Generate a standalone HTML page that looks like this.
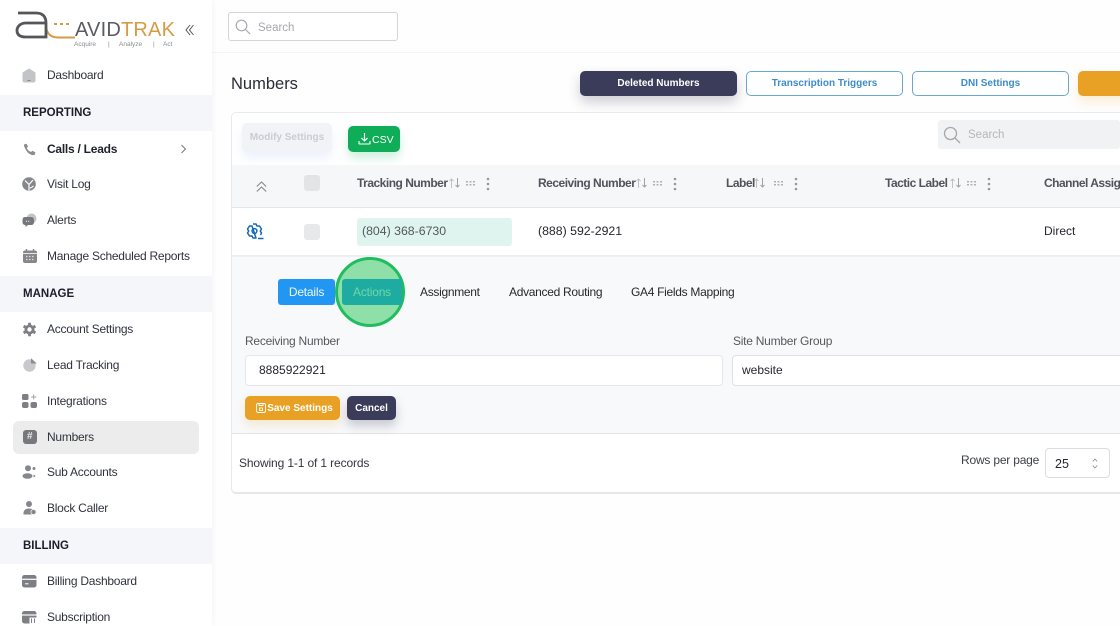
<!DOCTYPE html>
<html><head><meta charset="utf-8"><style>
html,body{margin:0;padding:0}
body{width:1120px;height:626px;overflow:hidden;position:relative;background:#fff;font-family:"Liberation Sans",sans-serif;color:#2c2f3a}
.a,.t,svg.i{position:absolute}
.t{white-space:nowrap;line-height:16px;height:16px}
.nav{font-size:12px;left:47px;color:#30333d;letter-spacing:-.25px}
.sec{left:0;width:212px;height:36px;background:#f4f6f9}
.sect{left:23px;font-size:11.5px;font-weight:bold;color:#1c1f2b}
.th{font-size:12px;font-weight:bold;color:#50535c;letter-spacing:-.5px}
.btn{position:absolute;border-radius:5px;box-sizing:border-box;font-size:10px;font-weight:bold;text-align:center;white-space:nowrap}
.tab{font-size:12px;color:#26282e;letter-spacing:-.3px}
.lbl{font-size:12px;color:#55585f;letter-spacing:-.25px}
.tag{font-size:6.5px;line-height:8px;height:8px;color:#8b8c90;top:41px}
svg.i{overflow:visible}
</style></head><body>
<!-- main -->
<div class="a" style="left:212px;top:0;width:908px;height:626px;background:#fefefe"></div>
<div class="a" style="left:212px;top:52px;width:908px;height:1px;background:#f3f4f6"></div>
<div class="a" style="left:228px;top:12px;width:170px;height:29px;box-sizing:border-box;border:1px solid #d3d5d9;border-radius:3px;background:#fff"></div>
<svg class="i" style="left:235px;top:19px" width="16" height="16" viewBox="0 0 16 16" fill="none" stroke="#a6a9ae" stroke-width="1.2"><circle cx="6.5" cy="6.5" r="5.3"/><path d="M10.500 10.500l4.500 4.500"/></svg>
<div class="t" style="left:258px;top:20px;font-size:11.5px;color:#a5a8ad">Search</div>

<!-- sidebar -->
<div class="a" style="left:0;top:0;width:212px;height:626px;background:#fff;box-shadow:2px 0 5px rgba(0,0,0,.03)"></div>
<svg class="i" style="left:16px;top:10px" width="90" height="32" viewBox="0 0 90 32" fill="none">
<path d="M30 17C31 24 35 27.500 42 27.500H59" stroke="#d79a45" stroke-width="2"/>
<path d="M38 14H56" stroke="#d79a45" stroke-width="2" stroke-dasharray="3 3"/>
<path d="M2 3H20C27 3 30 7 30 13V27H10C4 27 1 25 1 20.500C1 17 4 13 10 13H30" stroke="#55565a" stroke-width="2.800"/>
</svg>
<div class="t" style="left:75px;top:19px;height:22px;line-height:22px;font-size:20px;color:#5a5b60;letter-spacing:.2px">AVID<span style="color:#d79a45">TRAK</span></div>
<div class="t tag" style="left:74px">Acquire</div>
<div class="t tag" style="left:108px">|</div>
<div class="t tag" style="left:119px">Analyze</div>
<div class="t tag" style="left:153px">|</div>
<div class="t tag" style="left:163px">Act</div>
<svg class="i" style="left:185px;top:24px" width="9" height="12" viewBox="0 0 9 12" fill="none" stroke="#55565a" stroke-width="1"><path d="M5 1L1 6l4 5M8.500 1L4.500 6l4 5"/></svg>

<svg class="i" style="left:22px;top:68px" width="14" height="15" viewBox="0 0 14 15"><path d="M7 .5L13.500 4.500V12.500Q13.500 14.500 11.500 14.500H2.500Q.5 14.500 .5 12.500V4.500Z" fill="#c3c4c7"/><path d="M5.500 12.500H8.500" stroke="#777" stroke-width=".8"/></svg>
<div class="t nav" style="top:67px">Dashboard</div>

<div class="a sec" style="top:95px"></div><div class="t sect" style="top:105px">REPORTING</div>

<svg class="i" style="left:23px;top:143px" width="13" height="13" viewBox="0 0 13 13"><path d="M1 1.500L3.500 .8 5 3.500 3.800 5C4.500 6.800 6 8.200 8 9L9.500 7.800 12.500 9.500 11.500 12Q5 13 1 3Z" fill="#8a8c90"/></svg>
<div class="t nav" style="top:141px;font-weight:bold;color:#1f222c">Calls / Leads</div>
<svg class="i" style="left:180px;top:144px" width="7" height="10" viewBox="0 0 7 10" fill="none" stroke="#75777d" stroke-width="1"><path d="M1.500 1l4 4-4 4"/></svg>

<svg class="i" style="left:22px;top:177px" width="14" height="14" viewBox="0 0 14 14"><circle cx="7" cy="7" r="6.800" fill="#85878b"/><path d="M3 3.500L7 7.500 11 3M7 8V13.500M8 11Q10 10.500 11.500 9" stroke="#fff" stroke-width="1.200" fill="none"/></svg>
<div class="t nav" style="top:176px">Visit Log</div>

<svg class="i" style="left:22px;top:213px" width="15" height="15" viewBox="0 0 15 15"><circle cx="9.500" cy="5.500" r="5" fill="#c2c3c6"/><path d="M3 4H9Q12 4 12 7V9Q12 12 9 12H6L3.500 14V12Q.5 12 .5 9V7Q.5 4 3 4Z" fill="#75777c"/><path d="M4 8.200H8.500" stroke="#fff" stroke-width="1" stroke-dasharray="1 1.200"/></svg>
<div class="t nav" style="top:212px">Alerts</div>

<svg class="i" style="left:23px;top:249px" width="14" height="14" viewBox="0 0 14 14"><rect x="0" y="1.500" width="14" height="12.500" rx="2" fill="#85878b"/><path d="M3.500 0V3M10.500 0V3" stroke="#85878b" stroke-width="1.400"/><path d="M0 4.500H14" stroke="#fff" stroke-width=".8"/><path d="M3 7.500H11M3 10.500H11" stroke="#ddd" stroke-width="1.200" stroke-dasharray="1.500 1.500"/></svg>
<div class="t nav" style="top:248px">Manage Scheduled Reports</div>

<div class="a sec" style="top:276px"></div><div class="t sect" style="top:286px">MANAGE</div>

<svg class="i" style="left:22px;top:322px" width="15" height="15" viewBox="0 0 15 15"><circle cx="7.500" cy="7.500" r="5" fill="#7d7f84"/><path d="M7.500 .7V14.300M1.600 4.100L13.400 10.900M1.600 10.900L13.400 4.100" stroke="#7d7f84" stroke-width="2.800"/><circle cx="7.500" cy="7.500" r="2.200" fill="#fff"/></svg>
<div class="t nav" style="top:321px">Account Settings</div>

<svg class="i" style="left:23px;top:358px" width="14" height="14" viewBox="0 0 14 14"><circle cx="6.500" cy="7.500" r="6.200" fill="#c8c9cc"/><path d="M8 .3L13.800 5.500H8Z" fill="#8a8c90"/></svg>
<div class="t nav" style="top:357px">Lead Tracking</div>

<svg class="i" style="left:22px;top:394px" width="15" height="14" viewBox="0 0 15 14" fill="#7d7f84"><rect x="0" y="0" width="6.500" height="6" rx="1.500"/><rect x="0" y="8" width="6.500" height="6" rx="2"/><rect x="8.500" y="8" width="6.500" height="6" rx="2"/><path d="M11.700 .5V5.500M9.200 3H14.200" stroke="#9a9ca0" stroke-width=".9"/></svg>
<div class="t nav" style="top:393px">Integrations</div>

<div class="a" style="left:13px;top:421px;width:186px;height:33px;background:#ececec;border-radius:6px"></div>
<div class="a" style="left:23px;top:430px;width:13.500px;height:14px;border-radius:3px;background:#76787d;color:#e6e6e6;font-size:10px;line-height:14px;text-align:center;font-weight:bold">#</div>
<div class="t nav" style="top:429px">Numbers</div>

<svg class="i" style="left:22px;top:465px" width="14" height="14" viewBox="0 0 14 14" fill="#85878b"><circle cx="6" cy="3.200" r="3"/><ellipse cx="5.500" cy="11" rx="5" ry="2.800"/><circle cx="12" cy="3.500" r="1.500"/><path d="M11.500 9.500L13.800 11 11.500 12.500Z"/></svg>
<div class="t nav" style="top:464px">Sub Accounts</div>

<svg class="i" style="left:23px;top:501px" width="14" height="14" viewBox="0 0 14 14" fill="#85878b"><circle cx="6" cy="3" r="3"/><path d="M.5 13.500Q0 7.500 6 7.500T11.500 13.500Z"/><circle cx="10.500" cy="11" r="2.600" stroke="#fff" stroke-width=".7"/></svg>
<div class="t nav" style="top:500px">Block Caller</div>

<div class="a sec" style="top:528px"></div><div class="t sect" style="top:538px">BILLING</div>

<svg class="i" style="left:22px;top:575px" width="15" height="13" viewBox="0 0 15 13"><rect width="14.500" height="12.500" rx="2.500" fill="#7d7f84"/><path d="M0 4.300H14.500" stroke="#fff" stroke-width="1.200"/><path d="M3 8.800H6.500" stroke="#fff" stroke-width="1"/></svg>
<div class="t nav" style="top:573px">Billing Dashboard</div>

<svg class="i" style="left:22px;top:611px" width="15" height="13" viewBox="0 0 15 13"><rect width="14.500" height="12.500" rx="2.500" fill="#7d7f84"/><path d="M0 4H14.500" stroke="#fff" stroke-width="1.200"/><rect x="7.500" y="6.500" width="7" height="6" fill="#fff"/><path d="M9.500 12V7.500M12.500 7.500V12" stroke="#7d7f84"/></svg>
<div class="t nav" style="top:609px">Subscription</div>

<!-- page header -->
<div class="t" style="left:231px;top:74px;height:20px;line-height:20px;font-size:16.500px;color:#2a2d38">Numbers</div>
<div class="btn" style="left:580px;top:71px;width:157px;height:25px;background:#3a3c5a;color:#fff;line-height:26px;box-shadow:0 6px 12px rgba(58,60,90,.25)">Deleted Numbers</div>
<div class="btn" style="left:746px;top:71px;width:157px;height:25px;background:#fff;border:1px solid #6aa9cf;color:#3d8cc8;line-height:24px">Transcription Triggers</div>
<div class="btn" style="left:912px;top:71px;width:157px;height:25px;background:#fff;border:1px solid #6aa9cf;color:#3d8cc8;line-height:24px">DNI Settings</div>
<div class="btn" style="left:1078px;top:71px;width:157px;height:25px;background:#e8a124;box-shadow:0 6px 12px rgba(232,161,36,.18)"></div>

<!-- card -->
<div class="a" style="left:231px;top:112px;width:900px;height:382px;box-sizing:border-box;background:#fff;border:1px solid #e9eaec;border-bottom:2px solid #e6e7e9;border-radius:5px"></div>
<div class="btn" style="left:242px;top:123px;width:90px;height:29px;background:#f1f3f6;color:#c9ccd2;line-height:30px;box-shadow:0 6px 10px rgba(120,170,240,.15)">Modify Settings</div>
<div class="btn" style="left:348px;top:126px;width:52px;height:26px;background:#0fad58;color:#fff;line-height:26px;box-shadow:0 6px 10px rgba(15,173,88,.2)"></div>
<svg class="i" style="left:358px;top:132px" width="13" height="13" viewBox="0 0 13 13" fill="none" stroke="#fff" stroke-width="1.100"><path d="M6.500 1V9M3.500 6l3 3 3-3M1 9v2.500Q1 12 1.500 12H11.500Q12 12 12 11.500V9"/></svg>
<div class="t" style="left:372px;top:132px;font-size:10.500px;color:#fff">CSV</div>
<div class="a" style="left:938px;top:120px;width:182px;height:29px;background:#f1f2f4;border-radius:3px"></div>
<svg class="i" style="left:943px;top:126px" width="18" height="18" viewBox="0 0 18 18" fill="none" stroke="#a4a7ac" stroke-width="1.300"><circle cx="7.500" cy="7.500" r="6"/><path d="M12 12l5 5"/></svg>
<div class="t" style="left:968px;top:127px;font-size:11.500px;color:#b4b6bb">Search</div>

<!-- table head -->
<div class="a" style="left:232px;top:165px;width:888px;height:42px;background:#f5f7f9;border-bottom:1px solid #e4e5e8"></div>
<svg class="i" style="left:256px;top:181px" width="11" height="11" viewBox="0 0 11 11" fill="none" stroke="#84878c" stroke-width="1.100"><path d="M.8 5.500L5.500 1 10.200 5.500M.8 10.500L5.500 6 10.200 10.500"/></svg>
<div class="a" style="left:304px;top:175px;width:16px;height:16px;background:#e3e4e6;border-radius:3px"></div>
<div class="t th" style="left:357px;top:175px">Tracking Number</div>
<div class="t th" style="left:538px;top:175px">Receiving Number</div>
<div class="t th" style="left:726px;top:175px">Label</div>
<div class="t th" style="left:885px;top:175px">Tactic Label</div>
<div class="t th" style="left:1044px;top:175px">Channel Assignment</div>
<svg class="i" style="left:0;top:0" width="1120" height="626" fill="#aeb0b4">
<g><path d="M451.500 188V179M449.500 181l2-2 2 2" fill="none" stroke="#c0c2c5"/><path d="M457.500 178V187M455.500 185l2 2 2-2" fill="none" stroke="#a0a2a6"/><path d="M466 181h2v1.500h-2zM469.500 181h2v1.500h-2zM473 181h2v1.500h-2zM466 184h2v1.500h-2zM469.500 184h2v1.500h-2zM473 184h2v1.500h-2z"/><circle cx="488" cy="179" r="1.300" fill="#999"/><circle cx="488" cy="184" r="1.300" fill="#999"/><circle cx="488" cy="189" r="1.300" fill="#999"/></g>
<g transform="translate(187 0)"><path d="M451.500 188V179M449.500 181l2-2 2 2" fill="none" stroke="#c0c2c5"/><path d="M457.500 178V187M455.500 185l2 2 2-2" fill="none" stroke="#a0a2a6"/><path d="M466 181h2v1.500h-2zM469.500 181h2v1.500h-2zM473 181h2v1.500h-2zM466 184h2v1.500h-2zM469.500 184h2v1.500h-2zM473 184h2v1.500h-2z"/><circle cx="488" cy="179" r="1.300" fill="#999"/><circle cx="488" cy="184" r="1.300" fill="#999"/><circle cx="488" cy="189" r="1.300" fill="#999"/></g>
<g transform="translate(308 0)"><path d="M448.500 188V179M446.500 181l2-2 2 2" fill="none" stroke="#c0c2c5"/><path d="M454.500 178V187M452.500 185l2 2 2-2" fill="none" stroke="#a0a2a6"/><path d="M466 181h2v1.500h-2zM469.500 181h2v1.500h-2zM473 181h2v1.500h-2zM466 184h2v1.500h-2zM469.500 184h2v1.500h-2zM473 184h2v1.500h-2z"/><circle cx="488" cy="179" r="1.300" fill="#999"/><circle cx="488" cy="184" r="1.300" fill="#999"/><circle cx="488" cy="189" r="1.300" fill="#999"/></g>
<g transform="translate(501 0)"><path d="M451.500 188V179M449.500 181l2-2 2 2" fill="none" stroke="#c0c2c5"/><path d="M457.500 178V187M455.500 185l2 2 2-2" fill="none" stroke="#a0a2a6"/><path d="M466 181h2v1.500h-2zM469.500 181h2v1.500h-2zM473 181h2v1.500h-2zM466 184h2v1.500h-2zM469.500 184h2v1.500h-2zM473 184h2v1.500h-2z"/><circle cx="488" cy="179" r="1.300" fill="#999"/><circle cx="488" cy="184" r="1.300" fill="#999"/><circle cx="488" cy="189" r="1.300" fill="#999"/></g>
</svg>

<!-- row -->
<svg class="i" style="left:246px;top:223px" width="18" height="17" viewBox="0 0 18 17" fill="none" stroke="#1668b4" stroke-width="1.500"><path d="M7 1H10L11 3L13.500 3L15.500 6L14.300 8L15.500 10L14.500 12M10 15H7L6 13L3.500 13L1.500 10L2.700 8L1.500 6L3.500 3L6 3Z" stroke-linejoin="round"/><circle cx="8.500" cy="8" r="2.400"/><path d="M12 15.500H17.500"/></svg>
<div class="a" style="left:304px;top:224px;width:16px;height:16px;background:#e7e8ea;border-radius:3px"></div>
<div class="a" style="left:357px;top:218px;width:155px;height:28px;background:#dff4ee;border-radius:3px"></div>
<div class="t" style="left:362px;top:223px;font-size:12.300px;color:#55585f">(804) 368-6730</div>
<div class="t" style="left:538px;top:223px;font-size:12.300px;color:#25272e">(888) 592-2921</div>
<div class="t" style="left:1044px;top:223px;font-size:12px;color:#25272e">Direct</div>

<!-- expanded -->
<div class="a" style="left:232px;top:255px;width:888px;height:179px;box-sizing:border-box;background:#f8f9fb;border-top:2px solid #eeeff1;border-bottom:1px solid #e3e4e7"></div>
<div class="btn" style="left:278px;top:279px;width:57px;height:26px;background:#2196f3;color:#f0f7ff;font-size:12px;font-weight:normal;line-height:26px;border-radius:3px;letter-spacing:-.2px">Details</div>
<div class="a" style="left:335px;top:257px;width:70px;height:70px;box-sizing:border-box;border-radius:50%;background:#8ee0a8;border:3px solid #20bd5f"></div>
<div class="btn" style="left:342px;top:279px;width:60px;height:26px;background:#1eaca2;color:#6fd7a6;font-size:12px;font-weight:normal;line-height:26px;border-radius:3px 0 0 3px;letter-spacing:-.2px">Actions</div>
<div class="t tab" style="left:420px;top:284px">Assignment</div>
<div class="t tab" style="left:509px;top:284px">Advanced Routing</div>
<div class="t tab" style="left:631px;top:284px">GA4 Fields Mapping</div>
<div class="t lbl" style="left:245px;top:333px">Receiving Number</div>
<div class="t lbl" style="left:733px;top:333px">Site Number Group</div>
<div class="a" style="left:245px;top:355px;width:478px;height:31px;box-sizing:border-box;background:#fff;border:1px solid #e6e7ea;border-radius:4px"></div>
<div class="t" style="left:259px;top:362px;font-size:12px;color:#25272e">8885922921</div>
<div class="a" style="left:732px;top:355px;width:420px;height:31px;box-sizing:border-box;background:#fff;border:1px solid #dfe0e3;border-radius:4px"></div>
<div class="t" style="left:742px;top:362px;font-size:12px;color:#25272e">website</div>
<div class="btn" style="left:245px;top:396px;width:95px;height:24px;background:#e8a124;color:#fff;line-height:25px;padding-left:15px;box-shadow:0 5px 10px rgba(232,161,36,.2)">Save Settings</div>
<svg class="i" style="left:256px;top:403px" width="10" height="10" viewBox="0 0 10 10" fill="none" stroke="#fff" stroke-width=".9"><rect x=".5" y=".5" width="9" height="9" rx="1.500"/><path d="M3 .5V2.500H7V.5"/><rect x="3.500" y="5" width="3" height="2.500"/></svg>
<div class="btn" style="left:347px;top:396px;width:49px;height:24px;background:#3a3c5a;color:#fff;line-height:25px;box-shadow:0 6px 10px rgba(58,60,90,.25)">Cancel</div>

<!-- footer -->
<div class="t" style="left:239px;top:455px;font-size:12px;color:#33363e;letter-spacing:-.13px">Showing 1-1 of 1 records</div>
<div class="t" style="left:961px;top:452px;font-size:12px;color:#3d4048;letter-spacing:-.2px">Rows per page</div>
<div class="a" style="left:1045px;top:448px;width:65px;height:30px;box-sizing:border-box;background:#fff;border:1px solid #dcdde0;border-radius:4px"></div>
<div class="t" style="left:1055px;top:456px;font-size:12.500px;color:#25272e">25</div>
<svg class="i" style="left:1092px;top:458px" width="6" height="11" viewBox="0 0 6 11" fill="none" stroke="#8c8f94" stroke-width=".9"><path d="M.8 3.500L3 1l2.200 2.500M.8 7.500L3 10l2.200-2.500"/></svg>
</body></html>
